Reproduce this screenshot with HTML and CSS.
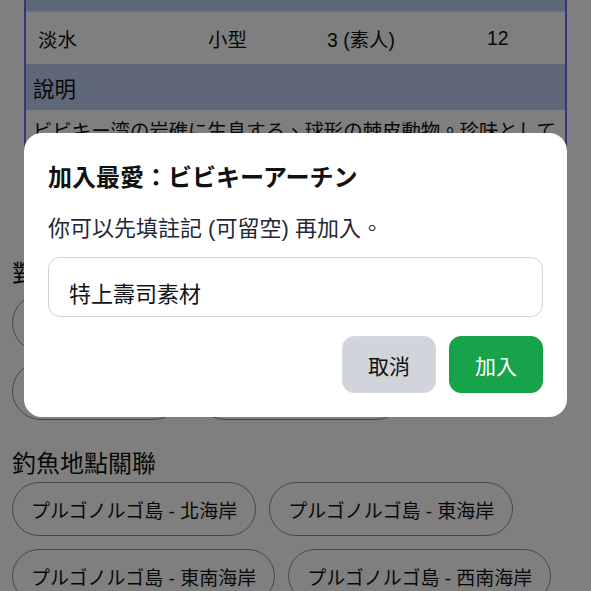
FILE: index.html
```html
<!DOCTYPE html>
<html lang="zh-Hant">
<head>
	<meta charset="utf-8">
	<link rel="stylesheet" href="styles.css">
</head>
<body>
	<div class="page">
		<div class="fishTable">
			<div class="row head"></div>
			<div class="row data">
				<span>淡水</span><span>小型</span><span>3 (素人)</span><span>12</span>
			</div>
			<div class="row head2">說明</div>
			<div class="desc">ビビキー湾の岩礁に生息する、球形の棘皮動物。珍味として</div>
		</div>

		<h2 class="sectionTitle first">對應料理</h2>
		<div class="chips tall">
			<span class="chip">ビビキーアーチンの軍艦巻き</span>
			<span class="chip">ウニの濃厚パスタ</span>
			<span class="chip">特上壽司素材盛</span>
			<span class="chip">ビビキー海鮮丼定食</span>
		</div>

		<h2 class="sectionTitle">釣魚地點關聯</h2>
		<div class="chips">
			<span class="chip">プルゴノルゴ島 - 北海岸</span>
			<span class="chip">プルゴノルゴ島 - 東海岸</span>
			<span class="chip">プルゴノルゴ島 - 東南海岸</span>
			<span class="chip">プルゴノルゴ島 - 西南海岸</span>
		</div>
	</div>

	<div class="overlay">
		<div class="dialog">
			<h3 class="dialogTitle">加入最愛：ビビキーアーチン</h3>
			<p class="dialogText">你可以先填註記 (可留空) 再加入。</p>
			<input class="noteInput" type="text" value="特上壽司素材">
			<div class="actions">
				<button class="btn cancel">取消</button>
				<button class="btn add">加入</button>
			</div>
		</div>
	</div>
</body>
</html>
```

FILE: styles.css
```css
* {
	box-sizing: border-box;
	font-family: "Liberation Sans", "Noto Sans CJK TC", sans-serif;
}

body {
	margin: 0;
	background: #fff;
	color: #111;
	overflow: hidden;
}

/* page is scrolled a bit, first header row is mostly above the fold */
.page {
	margin-top: -34px;
	padding: 0 12px;
}

.fishTable {
	margin: 0 12px;
	border-left: 2px solid #6a6af5;
	border-right: 2px solid #6a6af5;
	font-size: 19.4px;
}

.row {
	display: grid;
	grid-template-columns: 170px 119px 160px 1fr;
	align-items: center;
	padding-left: 12px;
}

.head {
	height: 46px;
	background: #bdd0f3;
	border-bottom: 1px solid #d8e2f4;
}

.data {
	height: 52px;
	background: #fff;
}

.head2 {
	display: flex;
	height: 46px;
	padding-left: 7px;
	background: #bdd0f3;
	font-size: 21.5px;
}

.desc {
	padding: 6px 7px 36px;
	line-height: 30px;
	white-space: nowrap;
	overflow: hidden;
	border-bottom: 2px solid #6a6af5;
}

.sectionTitle {
	margin: 74px 0 4px;
	font-size: 24px;
	font-weight: normal;
	line-height: 32px;
}

.chips + .sectionTitle {
	margin-top: 28px;
	margin-bottom: 2px;
}

.chips {
	display: flex;
	flex-wrap: wrap;
	gap: 13px;
}

.chips.tall {
	row-gap: 10px;
}

.chip {
	display: inline-flex;
	align-items: center;
	height: 54px;
	padding: 0 18px;
	border: 1.5px solid #8490a6;
	border-radius: 27px;
	font-size: 19px;
	color: #111;
	white-space: nowrap;
}

.chips.tall .chip {
	height: 58px;
	border-radius: 29px;
}

.overlay {
	position: fixed;
	inset: 0;
	padding: 133px 24px 0;
	background: rgba(0, 0, 0, 0.5);
}

.dialog {
	background: #fff;
	border-radius: 18px;
	padding: 28px 24px 24px;
}

.dialogTitle {
	margin: 0;
	font-size: 24px;
	font-weight: bold;
	line-height: 33px;
	color: #111;
}

.dialogText {
	margin: 20px 0 0;
	font-size: 22px;
	line-height: 30px;
	color: #1f2937;
}

.noteInput {
	display: block;
	width: 100%;
	height: 60px;
	margin-top: 13px;
	padding: 10px 20px 0;
	border: 1.5px solid #d1d5db;
	border-radius: 12px;
	font-size: 22px;
	color: #111;
	outline: none;
}

.actions {
	display: flex;
	justify-content: flex-end;
	gap: 13px;
	margin-top: 19px;
}

.btn {
	height: 57px;
	padding: 0 25px;
	border: 1px solid transparent;
	border-radius: 12px;
	font-size: 21px;
}

.cancel {
	background: #d1d5db;
	border-color: #d6d9df;
	color: #111;
}

.add {
	background: #16a34a;
	border-color: #15a046;
	color: #fff;
}
```
